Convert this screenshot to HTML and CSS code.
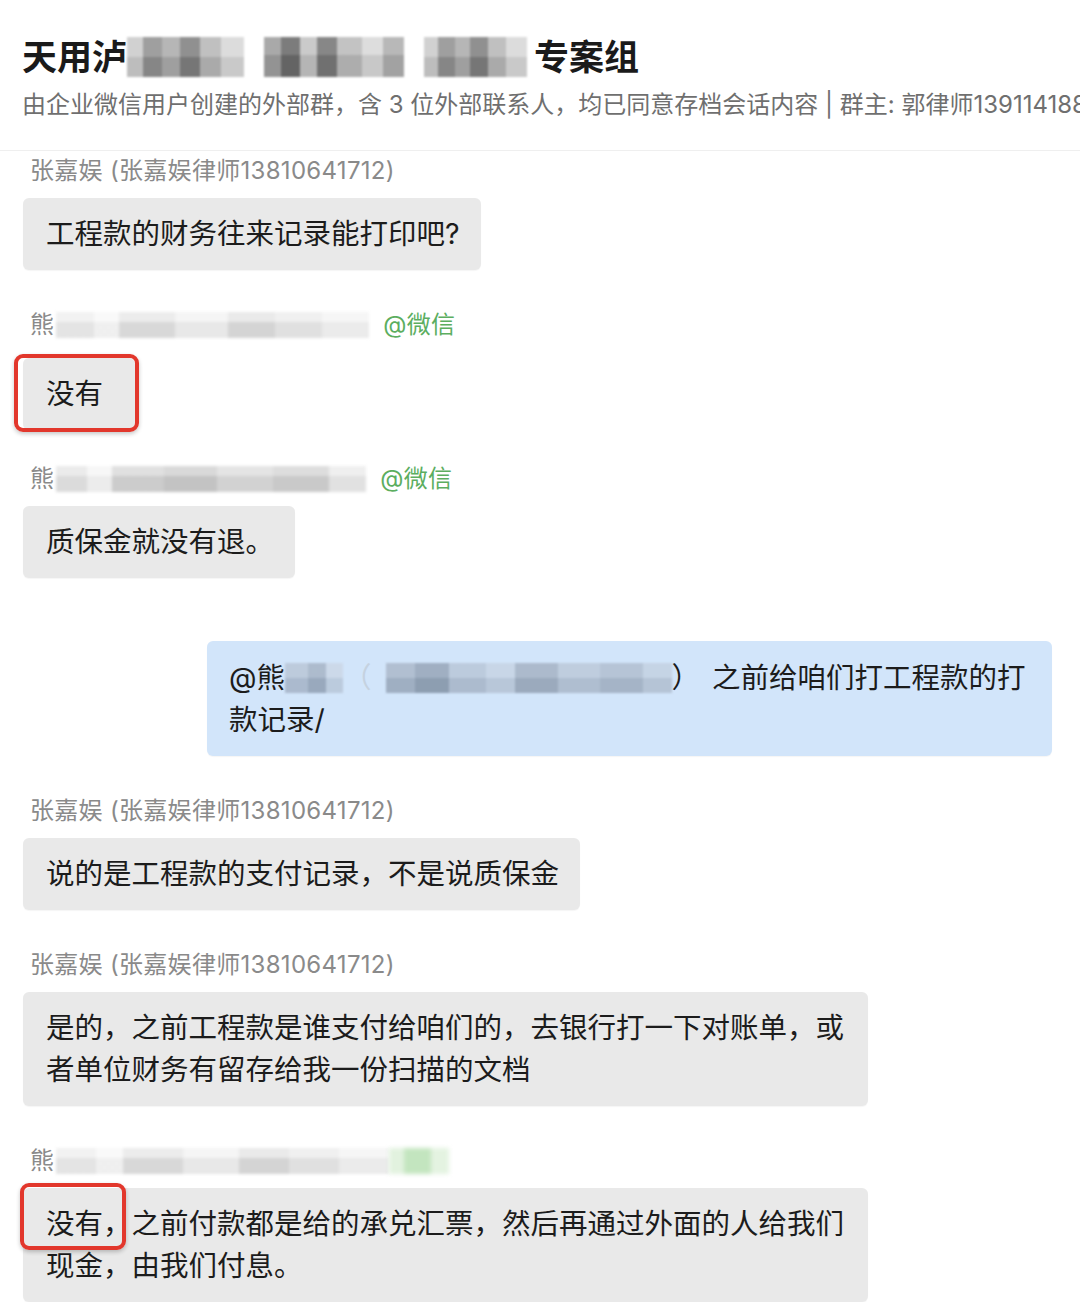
FILE: index.html
```html
<!DOCTYPE html>
<html lang="zh-CN">
<head>
<meta charset="utf-8">
<title>专案组</title>
<link rel="stylesheet" href="styles.css">
</head>
<body>
<header class="head">
  <h1 class="title">天用泸<span class="mosaic mz-dark w117"></span><span class="mosaic mz-dark2 w140 gap20"></span><span class="mosaic mz-dark w103 gap20"></span><span class="title-end">专案组</span></h1>
  <p class="sub">由企业微信用户创建的外部群，含 3 位外部联系人，均已同意存档会话内容 | 群主: 郭律师13911418888</p>
</header>

<main class="chat">
  <section class="msg first">
    <div class="name">张嘉娱 (张嘉娱律师13810641712)</div>
    <div class="bubble">工程款的财务往来记录能打印吧?</div>
  </section>

  <section class="msg">
    <div class="name name-tall">熊<span class="mosaic mz-light w313"></span><span class="wx">@微信</span></div>
    <div class="bubble marked">没有<span class="redbox"></span></div>
  </section>

  <section class="msg tight">
    <div class="name">熊<span class="mosaic mz-light2 w310"></span><span class="wx">@微信</span></div>
    <div class="bubble">质保金就没有退。</div>
  </section>

  <section class="msg mine">
    <div class="bubble blue">@熊<span class="mosaic mz-blue w58"></span><span class="faint">（</span><span class="mosaic mz-blue2 w290"></span>）<span class="after-mention">之前给咱们打工程款的打</span><br>款记录/</div>
  </section>

  <section class="msg">
    <div class="name">张嘉娱 (张嘉娱律师13810641712)</div>
    <div class="bubble">说的是工程款的支付记录，不是说质保金</div>
  </section>

  <section class="msg">
    <div class="name">张嘉娱 (张嘉娱律师13810641712)</div>
    <div class="bubble">是的，之前工程款是谁支付给咱们的，去银行打一下对账单，或者单位财务有留存给我一份扫描的文档</div>
  </section>

  <section class="msg">
    <div class="name">熊<span class="mosaic mz-light w333"></span><span class="mosaic mz-green w60"></span></div>
    <div class="bubble"><span class="hl">没有，<span class="redbox inline"></span></span>之前付款都是给的承兑汇票，然后再通过外面的人给我们现金，由我们付息。</div>
  </section>
</main>
</body>
</html>
```

FILE: styles.css
```css
* { box-sizing: border-box; }

html, body {
  margin: 0;
  padding: 0;
  background: #ffffff;
}

body {
  width: 1080px;
  overflow: hidden;
  font-family: "Inter", "Noto Sans CJK SC", "Noto Sans", sans-serif;
  color: #1c1c1c;
}

/* ---------- header ---------- */
.head {
  padding: 36px 0 30px 22px;
  border-bottom: 1px solid #efefef;
  white-space: nowrap;
  overflow: hidden;
}

.title {
  margin: 0;
  font-size: 35px;
  line-height: 42px;
  font-weight: 700;
  color: #1a1a1a;
  display: flex;
  align-items: center;
}

.title-end { margin-left: 7px; }

.sub {
  margin: 12px 0 0;
  font-size: 24px;
  line-height: 30px;
  color: #6f6f6f;
}

/* ---------- mosaic (pixelated redaction) ---------- */
.mosaic {
  display: inline-block;
  vertical-align: middle;
  height: 28px;
  filter: blur(1.2px);
}

.title .mosaic { height: 40px; }

.gap20 { margin-left: 20px; }

.w58 { width: 58px; }
.w60 { width: 60px; }
.w103 { width: 103px; }
.w117 { width: 117px; }
.w140 { width: 140px; }
.w290 { width: 286px; margin-left: 14px; }
.w310 { width: 310px; margin-left: 2px; }
.w313 { width: 313px; margin-left: 2px; }
.w333 { width: 333px; margin-left: 2px; }

.mz-dark {
  background:
    linear-gradient(180deg, rgba(255,255,255,0.15) 0 50%, rgba(0,0,0,0.06) 50% 100%),
    linear-gradient(90deg, #c9c9c9 0 14%, #8e8e8e 14% 30%, #a9a9a9 30% 45%, #7d7d7d 45% 62%, #b5b5b5 62% 80%, #d6d6d6 80% 100%);
}

.mz-dark2 {
  background:
    linear-gradient(180deg, rgba(255,255,255,0.1) 0 45%, rgba(0,0,0,0.08) 45% 100%),
    linear-gradient(90deg, #a0a0a0 0 12%, #6d6d6d 12% 26%, #c4c4c4 26% 38%, #7a7a7a 38% 52%, #bcbcbc 52% 70%, #d9d9d9 70% 85%, #b0b0b0 85% 100%);
}

.mz-light {
  height: 26px;
  filter: blur(1.8px);
  background:
    linear-gradient(180deg, rgba(255,255,255,0.45) 0 40%, rgba(0,0,0,0.02) 40% 100%),
    linear-gradient(90deg, #e8e8e8 0 12%, #f4f4f4 12% 20%, #dcdcdc 20% 38%, #ececec 38% 55%, #d8d8d8 55% 70%, #e4e4e4 70% 85%, #efefef 85% 100%);
}

.mz-light2 {
  height: 26px;
  filter: blur(1.8px);
  background:
    linear-gradient(180deg, rgba(255,255,255,0.3) 0 40%, rgba(0,0,0,0.03) 40% 100%),
    linear-gradient(90deg, #e2e2e2 0 10%, #f3f3f3 10% 18%, #d2d2d2 18% 35%, #c9c9c9 35% 52%, #d9d9d9 52% 70%, #cfcfcf 70% 88%, #e8e8e8 88% 100%);
}

.mz-green {
  height: 26px;
  filter: blur(2px);
  background: linear-gradient(90deg, #e2f2df 0 25%, #c3e5bf 25% 70%, #e4f3e1 70% 100%);
}

.mz-blue {
  height: 30px;
  background:
    linear-gradient(180deg, rgba(255,255,255,0.15) 0 50%, rgba(0,0,0,0.04) 50% 100%),
    linear-gradient(90deg, #b2c2d6 0 40%, #9fb0c5 40% 70%, #c3d3e6 70% 100%);
}

.mz-blue2 {
  height: 30px;
  background:
    linear-gradient(180deg, rgba(255,255,255,0.1) 0 50%, rgba(0,0,0,0.05) 50% 100%),
    linear-gradient(90deg, #a8b8cc 0 10%, #95a6bb 10% 22%, #b5c5d9 22% 35%, #c2d2e5 35% 45%, #a3b3c7 45% 60%, #b8c8db 60% 75%, #aebed2 75% 90%, #bfcfe2 90% 100%);
}

/* ---------- chat ---------- */
.chat {
  padding: 0 28px 0 23px;
  display: flex;
  flex-direction: column;
}

.msg {
  margin-top: 40px;
  display: flex;
  flex-direction: column;
  align-items: flex-start;
}

.msg.first { margin-top: 5px; }
.msg.tight { margin-top: 34px; }
.msg.mine { margin-top: 63px; align-items: flex-end; }

.name {
  padding-left: 7px;
  height: 30px;
  line-height: 30px;
  font-size: 24px;
  letter-spacing: 0.3px;
  color: #8a8a8a;
  margin-bottom: 12px;
  white-space: nowrap;
  display: flex;
  align-items: center;
}

.name-tall { margin-bottom: 18px; }

.wx {
  margin-left: 14px;
  font-size: 24px;
  color: #5cae5f;
}

.bubble {
  position: relative;
  max-width: 845px;
  min-width: 112px;
  padding: 15px 21px 15px 23px;
  font-size: 28.5px;
  line-height: 42px;
  background: #e9e9e9;
  border-radius: 6px;
  color: #1c1c1c;
  box-shadow: 0 1px 1px rgba(0, 0, 0, 0.04);
}

.bubble.blue {
  width: 845px;
  background: #d2e5fa;
  padding: 16px 18px 15px 22px;
  white-space: nowrap;
}

.faint {
  color: #c5d2e0;
}

.after-mention { margin-left: 12px; }

.blue .mosaic { vertical-align: -5px; }

/* ---------- red annotation boxes ---------- */
.redbox {
  position: absolute;
  top: -4px;
  left: -9px;
  right: -4px;
  bottom: -2px;
  border: 4px solid #e2372c;
  border-radius: 9px;
  box-shadow: 0 2px 4px rgba(0, 0, 0, 0.22);
  pointer-events: none;
}

.hl {
  position: relative;
  display: inline-block;
  line-height: 42px;
}

.redbox.inline {
  top: -20px;
  left: -26px;
  right: 6px;
  bottom: -5px;
}
```
